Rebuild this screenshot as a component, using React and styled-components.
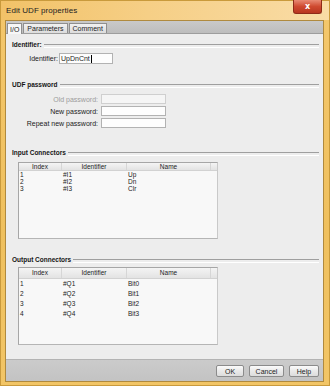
import React from "react";
import styled, { createGlobalStyle } from "styled-components";

const GlobalStyle = createGlobalStyle`
  html, body { margin: 0; padding: 0; background: #f0c263; }
  body { font-family: "Liberation Sans", Arial, sans-serif; color: #1b1b1b; }
  * { box-sizing: border-box; }
`;

const Window = styled.div`
  width: 330px;
  height: 386px;
  display: flex;
  flex-direction: column;
  background: linear-gradient(to bottom, #f4c76c, #efc05e 60%, #f2c566);
  border: 1px solid #c99a3c;
  padding-bottom: 3px;
`;

const TitleBar = styled.div`
  height: 19px;
  flex: none;
  display: flex;
  align-items: flex-start;
  justify-content: space-between;
  padding: 0 7px 0 5px;
  background: linear-gradient(to right, #f2c268 0%, #f6cf86 45%, #f9dca6 100%);
`;

const Title = styled.span`
  font-size: 8px;
  line-height: 19px;
  color: #222;
  letter-spacing: 0.05px;
`;

const CloseButton = styled.div`
  width: 29px;
  height: 14px;
  margin-top: -1px;
  display: flex;
  align-items: center;
  justify-content: center;
  background: linear-gradient(to bottom, #e88a73, #cf4a30 50%, #b83620);
  border: 1px solid #8e2a18;
  border-top: none;
  border-radius: 0 0 3px 3px;
  color: #fff;
  font-family: "DejaVu Sans", sans-serif;
  font-weight: bold;
  font-size: 8px;
  line-height: 1;
`;

const Body = styled.div`
  flex: 1;
  display: flex;
  flex-direction: column;
  margin: 0 5px 0 4px;
  border: 1px solid #b08a3e;
  background: #ececec;
`;

const TabStrip = styled.div`
  height: 13px;
  flex: none;
  display: flex;
  align-items: flex-end;
  padding-left: 1px;
  gap: 1px;
  background: linear-gradient(to bottom, #c9c9c9, #bdbdbd);
  border-bottom: 1px solid #9d9d9d;
`;

const Tab = styled.div`
  height: ${(p) => (p.$active ? "11px" : "10px")};
  padding: 0 ${(p) => p.$pad}px;
  display: flex;
  align-items: center;
  font-size: 7px;
  color: #1d1d1d;
  background: ${(p) => (p.$active ? "#f7f7f7" : "linear-gradient(to bottom, #f1f1f1, #dcdcdc)")};
  border: 1px solid #8f8f8f;
  border-bottom: none;
  margin-bottom: ${(p) => (p.$active ? "-1px" : "0")};
`;

const Panel = styled.div`
  flex: 1;
  display: flex;
  flex-direction: column;
  padding: 6px 4px 0 6px;
  background: #ededed;
`;

const GroupHeader = styled.div`
  display: flex;
  align-items: center;
  gap: 2px;
  height: 9px;
  margin-top: ${(p) => p.$mt}px;
  font-size: 6.5px;
  font-weight: bold;
  color: #151515;
  white-space: nowrap;

  &::after {
    content: "";
    flex: 1;
    height: 2px;
    margin-top: 2px;
    border-top: 1px solid #9f9f9f;
    border-bottom: 1px solid #ffffff;
  }
`;

const FormRow = styled.div`
  display: grid;
  grid-template-columns: ${(p) => p.$labelWidth}px ${(p) => p.$boxWidth}px;
  column-gap: ${(p) => p.$gap}px;
  align-items: center;
  margin-top: ${(p) => p.$mt}px;
`;

const Label = styled.span`
  text-align: right;
  font-size: 7px;
  color: ${(p) => (p.$disabled ? "#9c9c9c" : "#1b1b1b")};
  white-space: nowrap;
`;

const TextBox = styled.div`
  height: ${(p) => p.$h}px;
  display: flex;
  align-items: center;
  padding-left: 1px;
  font-size: 7px;
  background: ${(p) => (p.$disabled ? "#f5f5f5" : "#fdfdfd")};
  border: 1px solid ${(p) => (p.$disabled ? "#cfcfcf" : "#b2b2b2")};
`;

const Caret = styled.span`
  display: inline-block;
  width: 1px;
  height: 8px;
  margin-left: 1px;
  background: #000;
`;

const Table = styled.div`
  width: 200px;
  height: ${(p) => p.$h}px;
  margin: ${(p) => p.$mt}px 0 0 6px;
  background: #f8f8f8;
  border: 1px solid #a6a6a6;
  border-right-color: #c9c9c9;
  border-bottom-color: #b5b5b5;
  display: flex;
  flex-direction: column;
`;

const HeaderRow = styled.div`
  display: grid;
  grid-template-columns: 43px 65px 84px 1fr;
  height: ${(p) => p.$h}px;
  background: linear-gradient(to bottom, #f4f4f4, #e3e3e3);
  border-bottom: 1px solid #d2d2d2;
  font-size: 6.5px;
  line-height: ${(p) => p.$h - 1}px;
  color: #1b1b1b;
`;

const HeaderCell = styled.span`
  text-align: center;
  border-right: 1px solid #d6d6d6;
  white-space: nowrap;
`;

const DataRow = styled.div`
  display: grid;
  grid-template-columns: 43px 65px 1fr;
  height: ${(p) => p.$h}px;
  font-size: 6.5px;
  line-height: ${(p) => p.$h}px;
  color: #1b1b1b;
`;

const Cell = styled.span`
  padding-left: 1px;
  white-space: nowrap;
`;

const ButtonBar = styled.div`
  height: 22px;
  flex: none;
  display: flex;
  justify-content: flex-end;
  align-items: center;
  gap: 5px;
  padding: 1px 4px 0 0;
  background: linear-gradient(to bottom, #cbcbcb, #c3c3c3);
  border-top: 1px solid #b3b3b3;
`;

const Button = styled.div`
  width: ${(p) => p.$w}px;
  height: 12px;
  display: flex;
  align-items: center;
  justify-content: center;
  font-size: 7px;
  color: #1b1b1b;
  background: linear-gradient(to bottom, #fbfbfb, #e9e9e9 50%, #dcdcdc);
  border: 1px solid #8b8b8b;
  border-radius: 2px;
`;

const inputRows = [
  ["1", "#I1", "Up"],
  ["2", "#I2", "Dn"],
  ["3", "#I3", "Clr"],
];

const outputRows = [
  ["1", "#Q1", "Bit0"],
  ["2", "#Q2", "Bit1"],
  ["3", "#Q3", "Bit2"],
  ["4", "#Q4", "Bit3"],
];

function Connectors({ rows, h, mt, headerH, rowH }) {
  return (
    <Table $h={h} $mt={mt}>
      <HeaderRow $h={headerH}>
        <HeaderCell>Index</HeaderCell>
        <HeaderCell>Identifier</HeaderCell>
        <HeaderCell>Name</HeaderCell>
        <span />
      </HeaderRow>
      {rows.map((r) => (
        <DataRow key={r[0]} $h={rowH}>
          <Cell>{r[0]}</Cell>
          <Cell>{r[1]}</Cell>
          <Cell>{r[2]}</Cell>
        </DataRow>
      ))}
    </Table>
  );
}

export default function App() {
  return (
    <>
      <GlobalStyle />
      <Window>
        <TitleBar>
          <Title>Edit UDF properties</Title>
          <CloseButton>x</CloseButton>
        </TitleBar>
        <Body>
          <TabStrip>
            <Tab $active $pad={2}>I/O</Tab>
            <Tab $pad={3}>Parameters</Tab>
            <Tab $pad={3}>Comment</Tab>
          </TabStrip>
          <Panel>
            <GroupHeader $mt={0}>Identifier:</GroupHeader>
            <FormRow $labelWidth={46} $boxWidth={54} $gap={1} $mt={4}>
              <Label>Identifier:</Label>
              <TextBox $h={11}>
                UpDnCnt<Caret />
              </TextBox>
            </FormRow>

            <GroupHeader $mt={16}>UDF password</GroupHeader>
            <FormRow $labelWidth={86} $boxWidth={65} $gap={3} $mt={5}>
              <Label $disabled>Old password:</Label>
              <TextBox $h={10} $disabled />
            </FormRow>
            <FormRow $labelWidth={86} $boxWidth={65} $gap={3} $mt={2}>
              <Label>New password:</Label>
              <TextBox $h={10} />
            </FormRow>
            <FormRow $labelWidth={86} $boxWidth={65} $gap={3} $mt={2}>
              <Label>Repeat new password:</Label>
              <TextBox $h={10} />
            </FormRow>

            <GroupHeader $mt={20}>Input Connectors</GroupHeader>
            <Connectors rows={inputRows} h={77} mt={5} headerH={8} rowH={7} />

            <GroupHeader $mt={16}>Output Connectors</GroupHeader>
            <Connectors rows={outputRows} h={78} mt={3} headerH={11} rowH={10} />
          </Panel>
          <ButtonBar>
            <Button $w={28}>OK</Button>
            <Button $w={35}>Cancel</Button>
            <Button $w={30}>Help</Button>
          </ButtonBar>
        </Body>
      </Window>
    </>
  );
}
